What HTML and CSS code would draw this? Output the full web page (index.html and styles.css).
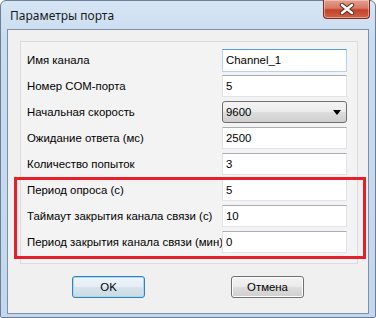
FILE: index.html
```html
<!DOCTYPE html>
<html lang="ru">

<head>
  <meta charset="UTF-8">
  <meta name="viewport" content="width=device-width, initial-scale=1.0">
  <title>Параметры порта</title>
  <link rel="stylesheet" href="styles.css">
</head>

<body>
  <div class="window">
    <div class="titlebar">
      <span class="title">Параметры порта</span>
      <button type="button" class="close" aria-label="Закрыть">
        <svg width="16" height="12" viewBox="0 0 16 12">
          <path d="M3 2 L13 10 M13 2 L3 10" stroke="#5a2418" stroke-width="4.4" stroke-linecap="round" />
          <path d="M3 2 L13 10 M13 2 L3 10" stroke="#ffffff" stroke-width="2.6" stroke-linecap="round" />
        </svg>
      </button>
    </div>

    <div class="client">
      <div class="panel">
        <div class="row">
          <label for="name">Имя канала</label>
          <input type="text" id="name" class="field hot" value="Channel_1">
        </div>
        <div class="row">
          <label for="port">Номер COM-порта</label>
          <input type="text" id="port" class="field" value="5">
        </div>
        <div class="row">
          <label>Начальная скорость</label>
          <div class="combo">
            <span>9600</span>
            <svg width="8" height="5" viewBox="0 0 8 5"><path d="M0 0 H8 L4 5 Z" fill="#000" /></svg>
          </div>
        </div>
        <div class="row">
          <label for="wait">Ожидание ответа (мс)</label>
          <input type="text" id="wait" class="field" value="2500">
        </div>
        <div class="row">
          <label for="tries">Количество попыток</label>
          <input type="text" id="tries" class="field" value="3">
        </div>

        <div class="marked">
          <div class="row">
            <label for="poll">Период опроса (с)</label>
            <input type="text" id="poll" class="field" value="5">
          </div>
          <div class="row">
            <label for="timeout">Таймаут закрытия канала связи (с)</label>
            <input type="text" id="timeout" class="field" value="10">
          </div>
          <div class="row">
            <label for="closing">Период закрытия канала связи (мин)</label>
            <input type="text" id="closing" class="field" value="0">
          </div>
        </div>
      </div>

      <div class="buttons">
        <button type="button" class="btn default">OK</button>
        <button type="button" class="btn">Отмена</button>
      </div>
    </div>
  </div>
</body>

</html>
```

FILE: styles.css
```css
body {
  margin: 0;
  font-family: "Liberation Sans", Arial, sans-serif;
  font-size: 11.4px;
  color: #000;
  background: #fff;
}

.window {
  width: 376px;
  height: 318px;
  box-sizing: border-box;
  border: 1px solid #6c7f95;
  border-radius: 6px 6px 2px 2px;
  background: linear-gradient(to bottom, #d6e5f5 0, #c9dcf0 40px, #c3d7ee 100%);
  display: flex;
  flex-direction: column;
}

.titlebar {
  height: 28px;
  display: flex;
  align-items: flex-start;
  justify-content: space-between;
}

.title {
  font-family: "Noto Sans", "Liberation Sans", sans-serif;
  font-size: 12px;
  margin: 6px 0 0 9px;
  color: #1a1a1a;
}

.close {
  width: 47px;
  height: 19px;
  margin: -1px 5px 0 0;
  padding: 0;
  border: 1px solid #7d2c1f;
  border-top: none;
  border-radius: 0 0 4px 4px;
  background: linear-gradient(to bottom, #e2a08f 0, #d77a66 45%, #c4412b 55%, #d0634a 100%);
  box-shadow: inset 0 0 0 1px rgba(255, 220, 210, 0.5);
  display: flex;
  align-items: center;
  justify-content: center;
}

.client {
  margin: 0 6px 3px 6px;
  flex: 1;
  border: 1px solid #7d8fa6;
  background: #f0f0f0;
}

.panel {
  margin: 11px 10px 0 12px;
  padding: 7px 9px 10px 6px;
  border: 1px solid #dcdcdc;
  background: #f3f3f3;
  display: flex;
  flex-direction: column;
  gap: 4px;
}

.marked {
  position: relative;
  display: flex;
  flex-direction: column;
  gap: 4px;
}

.marked::before {
  content: "";
  position: absolute;
  top: -2px;
  bottom: -6px;
  left: -13px;
  right: -18px;
  border: 3px solid #e5202b;
  pointer-events: none;
}

.row {
  display: flex;
  align-items: center;
  height: 22px;
}

.row label {
  width: 195px;
  white-space: nowrap;
}

.field {
  width: 125px;
  height: 22px;
  box-sizing: border-box;
  margin: 0;
  padding: 0 3px;
  font-family: inherit;
  font-size: 11.4px;
  border: 1px solid #e2e3ea;
  border-top-color: #abadb3;
  background: #fff;
  outline: none;
}

.field.hot {
  height: 23px;
  border-color: #b5d3ee;
  border-top-color: #5b9fd9;
}

.combo {
  width: 125px;
  height: 22px;
  box-sizing: border-box;
  border: 1px solid #707070;
  border-radius: 3px;
  background: linear-gradient(to bottom, #f4f4f4 0, #ebebeb 50%, #dddddd 51%, #cfcfcf 100%);
  display: flex;
  align-items: center;
  justify-content: space-between;
  padding: 0 5px 0 3px;
}

.buttons {
  display: flex;
  justify-content: center;
  gap: 86px;
  margin-top: 12px;
}

.btn {
  width: 73px;
  height: 22px;
  padding: 0;
  font-family: inherit;
  font-size: 11.4px;
  color: #000;
  border: 1px solid #707070;
  border-radius: 3px;
  background: linear-gradient(to bottom, #f2f2f2 0, #ebebeb 50%, #dddddd 51%, #cfcfcf 100%);
  box-shadow: inset 0 0 0 1px #fcfcfc;
}

.btn.default {
  border-color: #3c7fb1;
  box-shadow: inset 0 0 0 1px #9fdcf7;
  background: linear-gradient(to bottom, #eef5f9 0, #e4eef4 50%, #d6e3eb 51%, #cbdbe4 100%);
}
```
